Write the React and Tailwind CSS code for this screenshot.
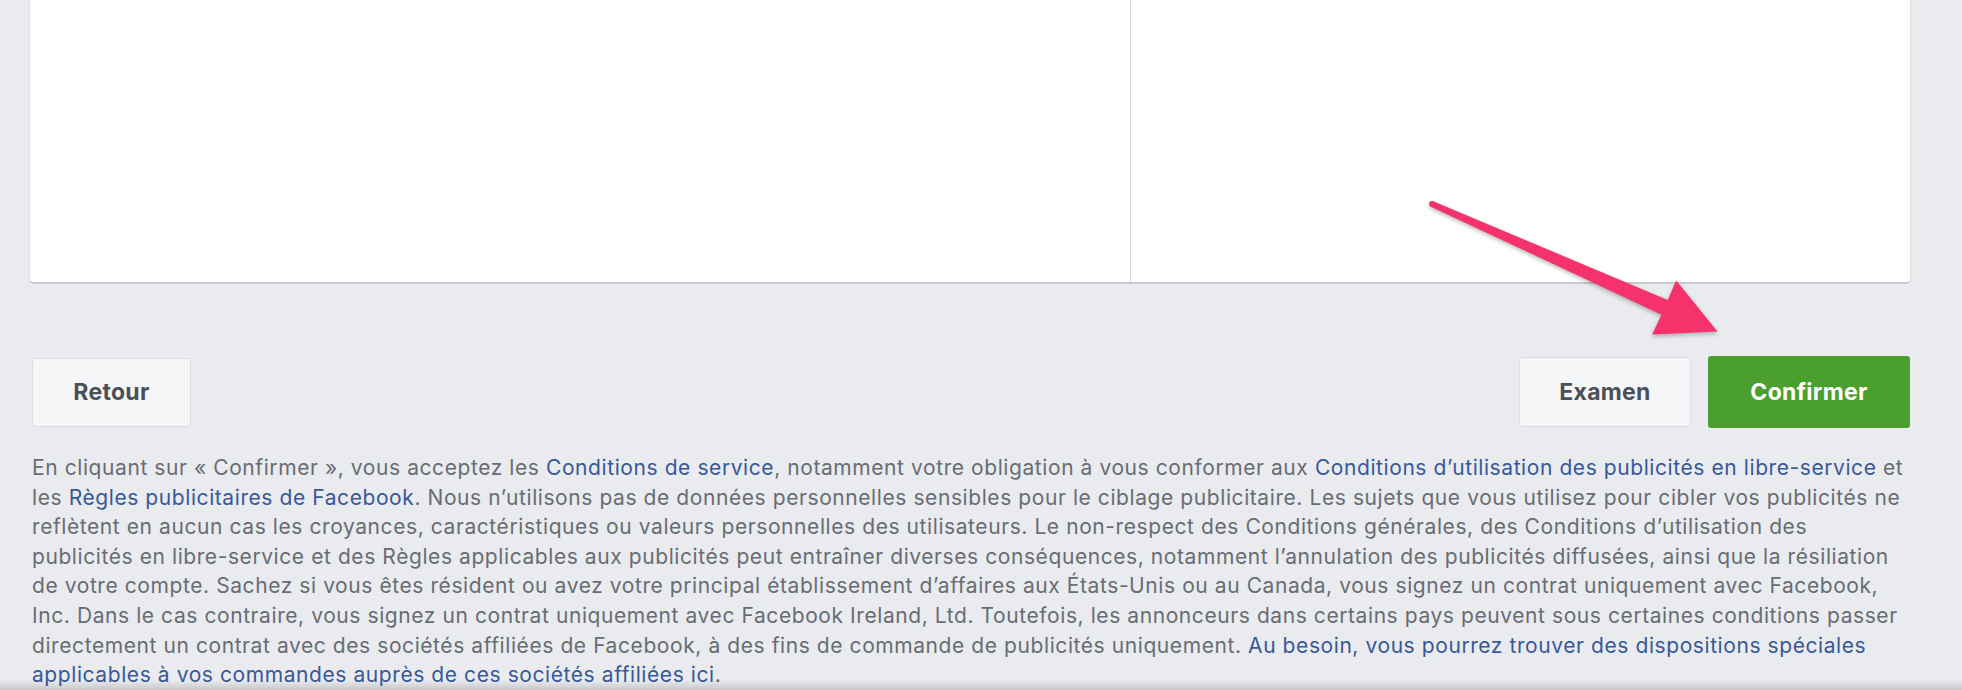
import React from 'react';

const LINK = 'text-[#385898]';

function Arrow() {
  // tapered pink annotation arrow pointing at the confirm button
  return (
    <svg
      className="absolute left-0 top-0 pointer-events-none drop-shadow-[0_2px_2px_rgba(0,0,0,0.28)]"
      width="1962"
      height="690"
      viewBox="0 0 1962 690"
    >
      <polygon
        fill="#f5326c"
        points="1430.8,206.7 1661.5,314.7 1652.1,334.4 1717.5,331.5 1676.2,280.4 1667.8,299.9 1433.2,201.3"
      />
      <circle cx="1432" cy="204" r="2.9" fill="#f5326c" />
    </svg>
  );
}

function Button({ children, variant = 'default', className = '' }) {
  const base =
    'rounded-[3px] text-[23px] font-bold tracking-[0.3px] leading-none flex items-center justify-center';
  const styles =
    variant === 'primary'
      ? 'bg-[#4a9f2f] text-white'
      : 'bg-[#f5f6f7] text-[#4b4f56] border border-[#dadde1]';
  return <button className={`${base} ${styles} ${className}`}>{children}</button>;
}

export default function App() {
  return (
    <div className="relative h-[690px] overflow-hidden bg-[#e9ebee] font-['Inter','Roboto',sans-serif]">
      <div className="pl-[32px] pr-[51px]">
        {/* Card */}
        <div className="-ml-[3px] h-[284px] flex bg-white rounded-b-[5px] border-x border-b-2 border-[#dddfe2] border-b-[#c8cacf]">
          <div className="w-[1101px] border-r border-[#d8dadf]" />
          <div className="flex-1" />
        </div>

        {/* Actions */}
        <div className="mt-[72px] h-[72px] flex items-center justify-between">
          <Button className="h-[69px] w-[159px]">Retour</Button>
          <div className="flex items-center gap-[17px] mr-[1px]">
            <Button className="h-[70px] w-[172px]">Examen</Button>
            <Button variant="primary" className="h-[72px] w-[202px]">
              Confirmer
            </Button>
          </div>
        </div>

        {/* Legal text */}
        <p className="mt-[25px] text-[21px] leading-[29.6px] tracking-[0.58px] text-[#686c73] whitespace-nowrap">
          En cliquant sur « Confirmer », vous acceptez les{' '}
          <span className={LINK}>Conditions de service</span>, notamment votre obligation à vous
          conformer aux{' '}
          <span className={LINK}>Conditions d’utilisation des publicités en libre-service</span> et
          <br />
          les <span className={LINK}>Règles publicitaires de Facebook</span>. Nous n’utilisons pas de
          données personnelles sensibles pour le ciblage publicitaire. Les sujets que vous utilisez
          pour cibler vos publicités ne
          <br />
          reflètent en aucun cas les croyances, caractéristiques ou valeurs personnelles des
          utilisateurs. Le non-respect des Conditions générales, des Conditions d’utilisation des
          <br />
          publicités en libre-service et des Règles applicables aux publicités peut entraîner
          diverses conséquences, notamment l’annulation des publicités diffusées, ainsi que la
          résiliation
          <br />
          de votre compte. Sachez si vous êtes résident ou avez votre principal établissement
          d’affaires aux États-Unis ou au Canada, vous signez un contrat uniquement avec Facebook,
          <br />
          Inc. Dans le cas contraire, vous signez un contrat uniquement avec Facebook Ireland, Ltd.
          Toutefois, les annonceurs dans certains pays peuvent sous certaines conditions passer
          <br />
          directement un contrat avec des sociétés affiliées de Facebook, à des fins de commande de
          publicités uniquement.{' '}
          <span className={LINK}>
            Au besoin, vous pourrez trouver des dispositions spéciales
            <br />
            applicables à vos commandes auprès de ces sociétés affiliées ici
          </span>
          .
        </p>
      </div>

      <Arrow />

      {/* window edge shading */}
      <div className="absolute inset-x-0 bottom-0 h-[10px] bg-gradient-to-b from-transparent to-black/15 pointer-events-none" />
    </div>
  );
}
